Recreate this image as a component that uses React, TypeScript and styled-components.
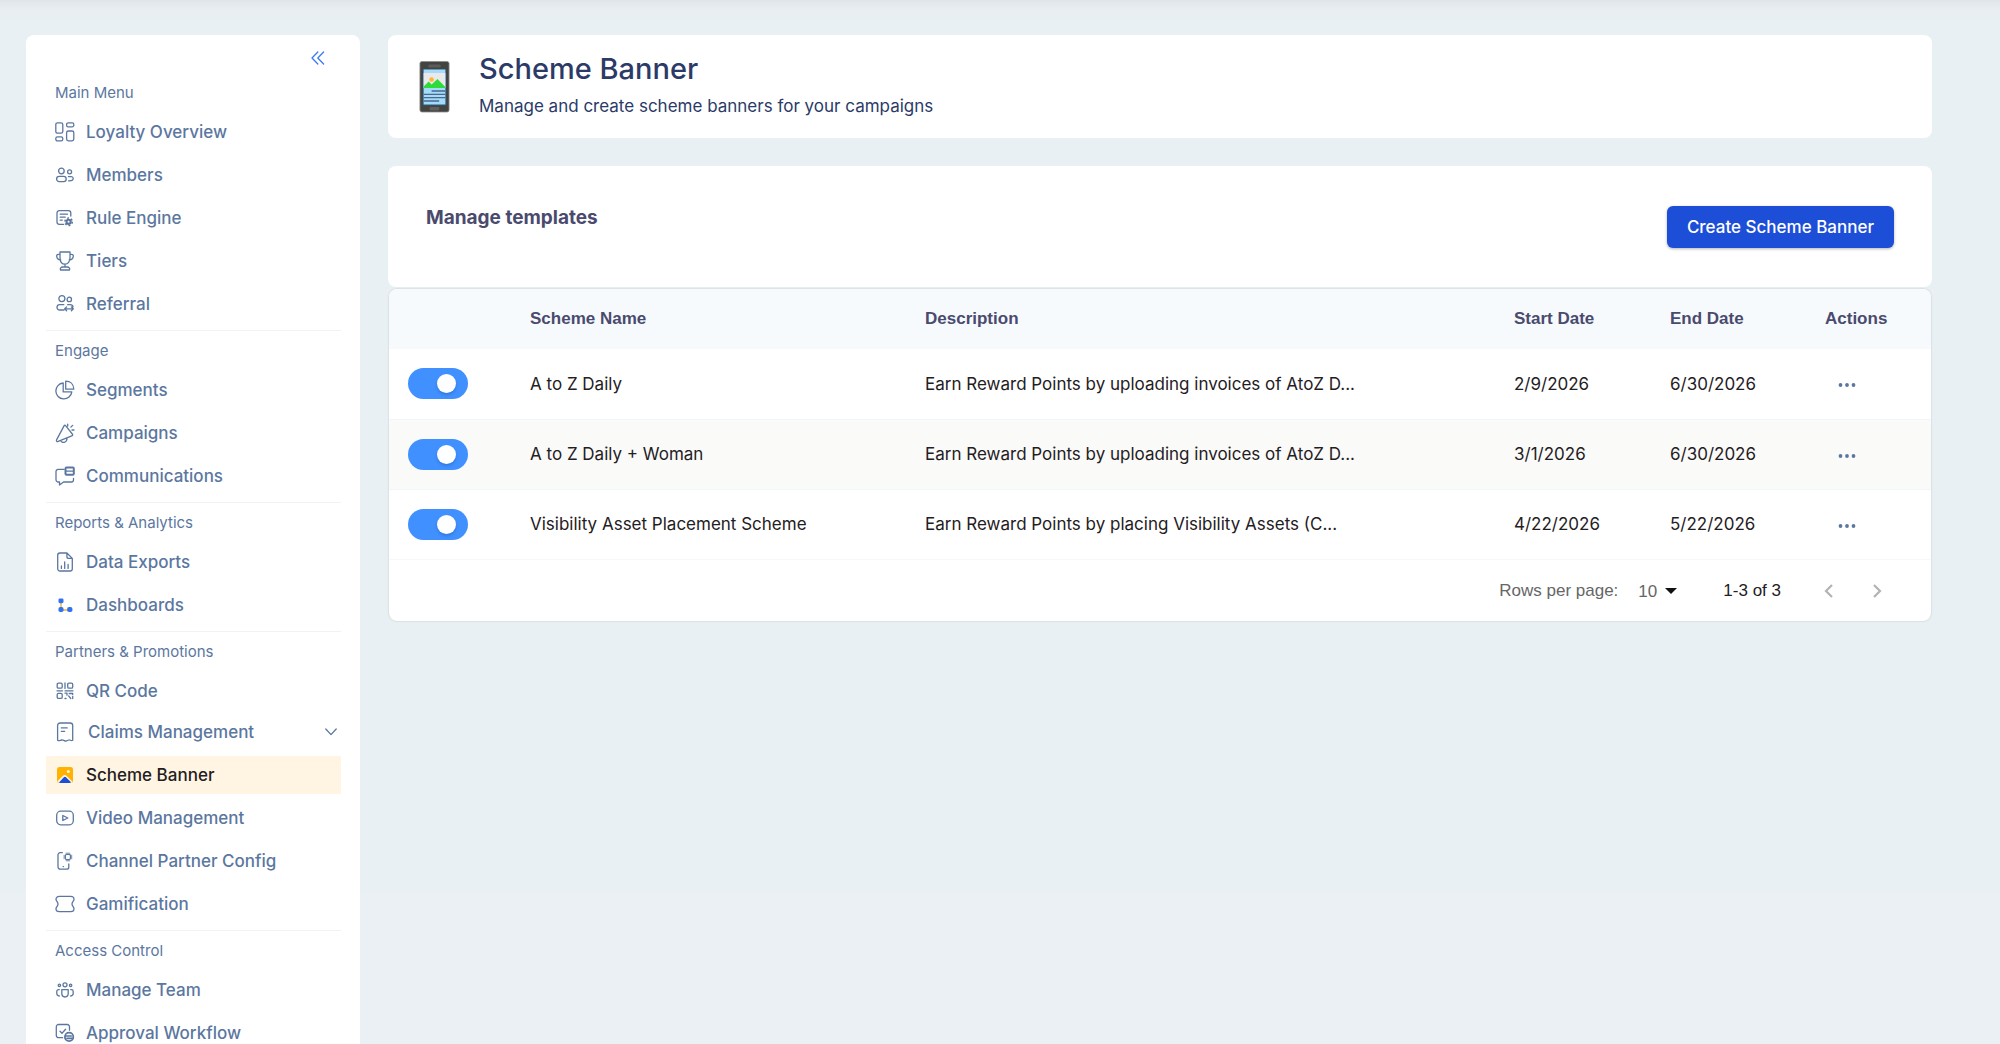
import React from "react";
import styled, { createGlobalStyle, css } from "styled-components";

const Global = createGlobalStyle`
  *, *::before, *::after { box-sizing: border-box; }
  html, body { margin: 0; }
  body {
    font-family: Inter, "Noto Sans", sans-serif;
    font-size: 16px;
    color: #1f2023;
    background: #ebf0f5;
    height: 100vh;
    overflow: hidden;
  }
  button, select, input { font: inherit; color: inherit; }
  h1, h2, p, ul { margin: 0; padding: 0; }
`;

const Shell = styled.div`
  display: flex;
  align-items: stretch;
  gap: 28px;
  height: 100vh;
  overflow: hidden;
  padding: 35px 68px 0 26px;
  background:
    linear-gradient(#e0e5ea, #e8edf1 8px, rgba(232, 240, 243, 0) 24px),
    linear-gradient(#e8f0f3 0, #e8f0f3 85%, #ebf0f5 86%);
`;

const Sidebar = styled.nav`
  flex: 0 0 334px;
  padding: 12px 19px 0 20px;
  border-radius: 8px 8px 0 0;
  background: #fff;
  overflow: hidden;
`;

const CollapseRow = styled.div`
  display: flex;
  justify-content: flex-end;
  height: 26px;
  padding-right: 13px;
`;

const IconButton = styled.button`
  display: inline-flex;
  align-items: center;
  justify-content: center;
  width: 20px;
  height: 22px;
  padding: 0;
  border: 0;
  background: none;
  color: #5b77a0;
  cursor: pointer;
`;

const CollapseButton = styled(IconButton)`
  color: #3b7bf6;
`;

const Group = styled.section`
  & + & {
    margin-top: 7px;
    border-top: 1px solid #eff3f7;
  }
`;

const GroupTitle = styled.h2`
  padding-left: 9px;
  font-size: 15px;
  font-weight: 400;
  line-height: 40px;
  color: #5b77a0;
`;

const NavList = styled.ul`
  display: flex;
  flex-direction: column;
  gap: 5px;
  list-style: none;
`;

const navRow = css`
  display: flex;
  align-items: center;
  width: 100%;
  border: 0;
  background: none;
  font-size: 17px;
  font-weight: 500;
  line-height: 24px;
  text-decoration: none;
  color: #5b77a0;
`;

const NavLink = styled.a<{ $active?: boolean }>`
  ${navRow}
  gap: 11px;
  height: 38px;
  padding: 0 9px;
  ${(p) => p.$active && css`background: #fff5e2; color: #1f2023;`}
`;

const NavToggle = styled.button`
  ${navRow}
  gap: 13px;
  height: 36px;
  padding: 0 4px 3px 9px;
  text-align: left;
  cursor: pointer;
`;

const NavText = styled.span`
  flex: 1;
`;

const Glyph = styled.svg`
  display: block;
  flex: none;
  fill: none;
  stroke: currentColor;
  stroke-width: 1.3;
  stroke-linecap: round;
  stroke-linejoin: round;
`;

const Main = styled.main`
  flex: 1;
  min-width: 0;
`;

const Card = styled.section`
  display: flex;
  border-radius: 8px;
  background: #fff;
`;

const PageHeader = styled(Card)`
  align-items: center;
  gap: 28px;
  height: 103px;
  padding: 0 30px;
`;

const PageTitle = styled.h1`
  font-size: 29px;
  font-weight: 500;
  line-height: 36px;
  color: #2b3a67;
`;

const PageText = styled.p`
  margin-top: 8px;
  font-size: 17px;
  line-height: 22px;
  color: #2b3a67;
`;

const HeaderCopy = styled.div`
  padding-bottom: 6px;
`;

const Toolbar = styled(Card)`
  justify-content: space-between;
  align-items: flex-start;
  height: 121px;
  margin-top: 28px;
  padding: 40px 38px 0;
`;

const ToolbarTitle = styled.h2`
  font-size: 19px;
  font-weight: 700;
  line-height: 24px;
  color: #4a4a6e;
`;

const PrimaryButton = styled.button`
  height: 42px;
  padding: 0 20px;
  border: 0;
  border-radius: 6px;
  background: #1d4ed8;
  box-shadow: 0 1px 3px rgba(0, 0, 0, 0.3);
  font-size: 17px;
  font-weight: 500;
  color: #fff;
  cursor: pointer;
`;

const TableCard = styled.section`
  margin: 2px 1px 0;
  border-radius: 8px;
  background: #fff;
  box-shadow: 0 0 2px rgba(0, 0, 0, 0.2);
  overflow: hidden;
`;

const Table = styled.table`
  width: 100%;
  border-collapse: collapse;
  table-layout: fixed;
`;

const HeadCell = styled.th<{ $width?: number }>`
  ${(p) => p.$width && css`width: ${p.$width}px;`}
  height: 60px;
  padding: 0 16px;
  background: #f6fafd;
  font-family: "Liberation Sans", Arial, sans-serif;
  font-size: 17px;
  font-weight: 700;
  text-align: left;
  color: #4a4a6e;
`;

const Row = styled.tr`
  border-bottom: 1px solid #eff7fc;
  &:nth-child(even) { background: #fafaf9; }
  &:last-child { border-bottom-color: #f6f8fa; }
`;

const Cell = styled.td<{ $lead?: boolean }>`
  height: 70px;
  padding: 0 16px 0 ${(p) => (p.$lead ? 19 : 16)}px;
  font-size: 17px;
  white-space: nowrap;
`;

const Switch = styled.input`
  appearance: none;
  display: block;
  width: 60px;
  height: 31px;
  margin: 0;
  padding: 6px 12px;
  border-radius: 16px;
  background: #4090ff;
  cursor: pointer;
  &::before {
    content: "";
    display: block;
    width: 19px;
    height: 19px;
    border-radius: 50%;
    background: #fff;
    box-shadow: 0 2px 3px rgba(0, 35, 90, 0.2);
  }
  &:checked::before { margin-left: auto; }
`;

const MoreButton = styled(IconButton)`
  width: 44px;
`;

const Footer = styled.footer`
  display: flex;
  align-items: center;
  justify-content: flex-end;
  height: 61px;
  padding: 2px 44px 0 0;
  font-family: "Liberation Sans", Arial, sans-serif;
  font-size: 17px;
`;

const RowsLabel = styled.label`
  color: #666;
`;

const SelectWrap = styled.span`
  display: flex;
  align-items: center;
  gap: 8px;
  margin: 0 46px 0 20px;
`;

const RowsSelect = styled.select`
  appearance: none;
  padding: 0;
  border: 0;
  background: none;
  color: #666;
`;

const Pager = styled.div`
  display: flex;
  gap: 28px;
  margin-left: 38px;
`;

const PageButton = styled(IconButton)`
  color: #b3b3b3;
`;

const icons: Record<string, React.ReactNode> = {
  overview: <><rect x="0.8" y="0.8" width="7" height="10.4" rx="1.8" /><rect x="11.6" y="0.8" width="7.2" height="4" rx="1.6" /><rect x="0.8" y="14.9" width="7" height="4" rx="1.6" /><rect x="11.6" y="9" width="7.2" height="9.8" rx="1.8" /></>,
  members: <><circle cx="6.4" cy="6" r="2.8" /><circle cx="14.6" cy="6.8" r="2" /><rect x="1.6" y="11.4" width="9.6" height="5.2" rx="2.6" /><path d="M13.4 11.6h2.9a2 2 0 0 1 1.9 2c0 1.400-1.600 2.200-3.700 2.200h-1" /></>,
  rules: <><path d="M8.600 16.400H4.400a2.400 2.400 0 0 1-2.400-2.400V5a2.400 2.400 0 0 1 2.400-2.400h9A2.400 2.400 0 0 1 15.800 5v3" /><path d="M5.200 6.200h7.300M5.200 9.200h5M5.200 12.200h2" /><circle cx="13.600" cy="13.800" r="2.100" strokeWidth="2.100" /><circle cx="13.600" cy="13.800" r="3.700" strokeWidth="1.500" strokeDasharray="1.900 1.970" strokeLinecap="butt" /></>,
  tiers: <><path d="M5 1h10v5.500c0 4-2 6.700-5 6.700S5 10.500 5 6.500zM5 3.300H3.400C2.300 3.300 1.700 4 1.700 5c0 2.200 1.400 3.700 4 4M15 3.300h1.600c1.100 0 1.700.7 1.700 1.700 0 2.200-1.400 3.700-4 4M10 13.200V16M5.500 19c-.6-1.800.6-3 2-3h5c1.400 0 2.600 1.200 2 3z" /></>,
  referral: <><circle cx="6.900" cy="4.600" r="3" /><circle cx="14.300" cy="5.400" r="2.200" /><path d="M9 16H4.800c-1.700 0-2.800-1-2.800-2.600s1.100-2.700 2.800-2.700h4M12.600 10.700h2.500c1.500 0 2.700.8 2.900 2.200M9.800 14.800h8.400M11.600 12.900l-1.900 1.900 1.900 1.900M16.400 12.900l1.900 1.900-1.900 1.900" /></>,
  segments: <><path d="M8.200 3a8 8 0 1 0 8.600 8.900H8.200zM10.700 1.200c4.500 0 7.900 3 8.100 7.900h-8.100z" /></>,
  campaigns: <><path d="M9.300 2.400 1.700 16.600c-.7 1.500.2 2.300 1.500 1.800l13.600-5.600c1-.4 1.100-1 .5-1.800L10.600 2.600c-.5-.6-1-.6-1.300-.2zM5.700 17.700c.8 1.400 2 2 3.500 1.600 1.700-.4 2.800-1.700 2.800-3.700M12.700 1.100v2M17.600 2.400l-1.700 1.700M19 7h-2" /></>,
  comms: <><path d="M9 3.400H3.200A2.200 2.200 0 0 0 1 5.600v8.200A2.200 2.200 0 0 0 3.200 16h1.300v3l4-3h7.800a2.200 2.200 0 0 0 2.200-2.200v-1.500" /><rect x="10.500" y="1.500" width="8.300" height="7.200" rx="1" strokeWidth="2" /><path d="M11 5.100h7" strokeWidth="1.400" /></>,
  exports: <><path d="M11.900 1H4.900a2.200 2.200 0 0 0-2.200 2.200v13.600A2.200 2.200 0 0 0 4.900 19h10.200a2.200 2.200 0 0 0 2.200-2.200V6.400zM11.900 1v3.400c0 1.200.8 2 2 2h3.400M6.400 14v2.400M9.700 9.900v6.500M13.100 12.500v3.900" /></>,
  dashboards: <g strokeLinecap="butt"><path d="M6 6v9h8" stroke="#f6ad2b" strokeWidth="1.400" /><g fill="#2f73f2" stroke="none"><rect x="3.500" y="3.400" width="5" height="4.800" rx="1.400" /><rect x="3.500" y="12" width="5" height="5" rx="1.800" /><rect x="12.200" y="12" width="5.200" height="5" rx="1.800" /></g></g>,
  qr: <><rect x="2.200" y="2.200" width="5" height="5" rx="1.200" /><rect x="12.700" y="2.200" width="5" height="5" rx="1.200" /><rect x="2.200" y="12.400" width="5" height="5" rx="1.200" /><path d="M10 2v5.400M2 9.800h5.500M10 9.800h8M10 12.200h2v2M10 17.500h1M14.200 12.500h3.500v1M13.600 14.900l2.200 2.600M17.700 15.500v2" /></>,
  claims: <><path d="M2.600 18.300V3.600C2.600 2 3.600 1 5.200 1h9.900c1.600 0 2.600 1 2.600 2.600v14.700c-1.600 1-2.700-.8-4-.3-1.300.4-2 1.400-3.500 1-1.500-.3-2-1.300-3.600-1-1.500.3-2.500 1.400-4 .3zM6.300 5.900h5.900M6.300 9.300h3.400" /></>,
  banner: <g stroke="none"><rect x="2" y="2" width="16" height="16" rx="2.500" fill="#ffb300" /><path d="M2.300 16.600 7.700 11q2-2 4 0l5.900 5.800q-.8 1.200-2.600 1.200H5q-2 0-2.700-1.400z" fill="#fff5e2" /><path d="M4 17.500 8.600 12.400q1.300-1.300 2.600 0l4.900 4.900q-.6.700-2 .7H6q-1.400 0-2-.5z" fill="#1d4ed8" /><circle cx="13.300" cy="6.400" r="1.500" fill="#fff5e2" /></g>,
  video: <><rect x="1.700" y="3.200" width="16.600" height="13.600" rx="4" /><path d="M7.800 7.500v5l5-2.500z" /></>,
  partner: <><path d="M7.300 1.700H5.200A2.200 2.200 0 0 0 3 3.900v12a2.200 2.200 0 0 0 2.200 2.200h6.400a2.200 2.200 0 0 0 2.200-2.200v-3M8.100 15.600h.4" /><rect x="10.300" y="3.400" width="5.200" height="5.200" rx="1.500" /><path d="M11 2.200h3.800M16.700 4.200v3.600M11 9.800h3.800M9.100 4.200v3.600" strokeWidth=".8" /></>,
  gamification: <path d="M4.300 2.400h11.400c2 0 3.300 1.100 3.300 2.900 0 1.900-2 2.300-2 4.700s2 2.800 2 4.700c0 1.800-1.300 2.900-3.300 2.900H4.300C2.300 17.600 1 16.500 1 14.700 1 12.800 3 12.400 3 10S1 7.200 1 5.300c0-1.800 1.300-2.900 3.300-2.900z" />,
  team: <><circle cx="10" cy="4.800" r="2" /><circle cx="4.400" cy="5.300" r="1.200" /><circle cx="15.600" cy="5.300" r="1.200" /><path d="M6.800 9.600h6.400v4c0 2-1.300 3.400-3.200 3.400s-3.200-1.400-3.200-3.400zM4.300 9.600h-.7C2.500 9.600 1.800 10.300 1.800 11.400v2.200c0 1.300.9 2.200 2.500 2.400M15.700 9.600h.7c1.100 0 1.800.7 1.800 1.800v2.200c0 1.300-.9 2.200-2.500 2.400" /></>,
  approval: <><path d="M7.600 14.700H3.500A2.200 2.200 0 0 1 1.300 12.500V3.700a2.200 2.200 0 0 1 2.200-2.200h8.800a2.200 2.200 0 0 1 2.200 2.200v3.500M5 8.200l2 2 3.600-3.900" /><circle cx="14.100" cy="13.900" r="4.200" strokeWidth="1.800" /><path d="M11 13h5.200M12 15.400h5" strokeWidth="1.700" /></>,
};

const Icon = ({ name }: { name: string }) => (
  <Glyph width="20" height="20" viewBox="0 0 20 20" aria-hidden="true">{icons[name]}</Glyph>
);

const PhoneArt = () => (
  <svg width="33" height="54" viewBox="0 0 34 54" preserveAspectRatio="none" aria-hidden="true">
    <rect x="2" y="1.500" width="30" height="50.500" rx="2" fill="#434341" stroke="#8a8a88" strokeWidth=".8" />
    <rect x="10.500" y="4.500" width="13" height="3" rx="1.500" fill="#5c5c59" />
    <rect x="4.800" y="9" width="24.400" height="36.500" fill="#2b587c" />
    <rect x="5.800" y="9.500" width="22.400" height="35" fill="#a3dbf8" />
    <rect x="5.800" y="13" width="22.400" height="15" fill="#e9e9ec" />
    <circle cx="14" cy="19.500" r="2.300" fill="#fdb62f" />
    <path d="M5.800 28v-1.500l5.200-5 3 3 6-5.500 8.200 8v1z" fill="#2fdb3a" />
    <path d="M14 31h14.200M5.800 34.300h22.400M5.800 37.700h22.400M5.800 41h16" stroke="#4b688d" strokeWidth="1.300" />
    <rect x="12" y="47" width="10" height="3.500" rx="1" fill="#60605d" />
  </svg>
);

type Item = { label: string; icon: string; active?: boolean; expandable?: boolean };

const menu: { title: string; items: Item[] }[] = [
  {
    title: "Main Menu",
    items: [
      { label: "Loyalty Overview", icon: "overview" },
      { label: "Members", icon: "members" },
      { label: "Rule Engine", icon: "rules" },
      { label: "Tiers", icon: "tiers" },
      { label: "Referral", icon: "referral" },
    ],
  },
  {
    title: "Engage",
    items: [
      { label: "Segments", icon: "segments" },
      { label: "Campaigns", icon: "campaigns" },
      { label: "Communications", icon: "comms" },
    ],
  },
  {
    title: "Reports & Analytics",
    items: [
      { label: "Data Exports", icon: "exports" },
      { label: "Dashboards", icon: "dashboards" },
    ],
  },
  {
    title: "Partners & Promotions",
    items: [
      { label: "QR Code", icon: "qr" },
      { label: "Claims Management", icon: "claims", expandable: true },
      { label: "Scheme Banner", icon: "banner", active: true },
      { label: "Video Management", icon: "video" },
      { label: "Channel Partner Config", icon: "partner" },
      { label: "Gamification", icon: "gamification" },
    ],
  },
  {
    title: "Access Control",
    items: [
      { label: "Manage Team", icon: "team" },
      { label: "Approval Workflow", icon: "approval" },
    ],
  },
];

const schemes = [
  { name: "A to Z Daily", description: "Earn Reward Points by uploading invoices of AtoZ D...", start: "2/9/2026", end: "6/30/2026" },
  { name: "A to Z Daily + Woman", description: "Earn Reward Points by uploading invoices of AtoZ D...", start: "3/1/2026", end: "6/30/2026" },
  { name: "Visibility Asset Placement Scheme", description: "Earn Reward Points by placing Visibility Assets (C...", start: "4/22/2026", end: "5/22/2026" },
];

export default function App() {
  return (
    <>
      <Global />
      <Shell>
        <Sidebar aria-label="Main">
          <CollapseRow>
            <CollapseButton type="button" aria-label="Collapse menu">
              <Glyph width="14" height="14" viewBox="0 0 14 14"><path d="M6.800 1 1 7l5.800 6M12.600 1 6.800 7l5.800 6" /></Glyph>
            </CollapseButton>
          </CollapseRow>
          {menu.map((group) => (
            <Group key={group.title}>
              <GroupTitle>{group.title}</GroupTitle>
              <NavList>
                {group.items.map((item) => (
                  <li key={item.label}>
                    {item.expandable ? (
                      <NavToggle type="button" aria-expanded={false}>
                        <Icon name={item.icon} />
                        <NavText>{item.label}</NavText>
                        <Glyph width="12" height="8" viewBox="0 0 12 8"><path d="M.8 1 6 6.600 11.200 1" /></Glyph>
                      </NavToggle>
                    ) : (
                      <NavLink href="#" $active={item.active} aria-current={item.active ? "page" : undefined}>
                        <Icon name={item.icon} />
                        <NavText>{item.label}</NavText>
                      </NavLink>
                    )}
                  </li>
                ))}
              </NavList>
            </Group>
          ))}
        </Sidebar>
        <Main>
          <PageHeader>
            <PhoneArt />
            <HeaderCopy>
              <PageTitle>Scheme Banner</PageTitle>
              <PageText>Manage and create scheme banners for your campaigns</PageText>
            </HeaderCopy>
          </PageHeader>
          <Toolbar>
            <ToolbarTitle>Manage templates</ToolbarTitle>
            <PrimaryButton type="button">Create Scheme Banner</PrimaryButton>
          </Toolbar>
          <TableCard>
            <Table>
              <thead>
                <tr>
                  <HeadCell $width={125} aria-label="Enabled" />
                  <HeadCell $width={395}>Scheme Name</HeadCell>
                  <HeadCell>Description</HeadCell>
                  <HeadCell $width={156}>Start Date</HeadCell>
                  <HeadCell $width={155}>End Date</HeadCell>
                  <HeadCell $width={122}>Actions</HeadCell>
                </tr>
              </thead>
              <tbody>
                {schemes.map((s) => (
                  <Row key={s.name}>
                    <Cell $lead><Switch type="checkbox" role="switch" defaultChecked aria-label={`Enable ${s.name}`} /></Cell>
                    <Cell>{s.name}</Cell>
                    <Cell>{s.description}</Cell>
                    <Cell>{s.start}</Cell>
                    <Cell>{s.end}</Cell>
                    <Cell>
                      <MoreButton type="button" aria-label={`Actions for ${s.name}`}>
                        <svg width="18" height="4" viewBox="0 0 18 4" fill="currentColor"><circle cx="2.500" cy="2" r="1.900" /><circle cx="9" cy="2" r="1.900" /><circle cx="15.500" cy="2" r="1.900" /></svg>
                      </MoreButton>
                    </Cell>
                  </Row>
                ))}
              </tbody>
            </Table>
            <Footer>
              <RowsLabel htmlFor="rows">Rows per page:</RowsLabel>
              <SelectWrap>
                <RowsSelect id="rows" defaultValue="10"><option>10</option></RowsSelect>
                <svg width="12" height="6" viewBox="0 0 12 6" aria-hidden="true"><path d="M0 0h12L6 6z" fill="#111" /></svg>
              </SelectWrap>
              <span>1-3 of 3</span>
              <Pager>
                <PageButton type="button" disabled aria-label="Previous page">
                  <Glyph width="10" height="14" viewBox="0 0 10 14"><path d="M8 1 2 7l6 6" strokeWidth="2.200" strokeLinecap="butt" strokeLinejoin="miter" /></Glyph>
                </PageButton>
                <PageButton type="button" disabled aria-label="Next page">
                  <Glyph width="10" height="14" viewBox="0 0 10 14"><path d="m2 1 6 6-6 6" strokeWidth="2.200" strokeLinecap="butt" strokeLinejoin="miter" /></Glyph>
                </PageButton>
              </Pager>
            </Footer>
          </TableCard>
        </Main>
      </Shell>
    </>
  );
}
